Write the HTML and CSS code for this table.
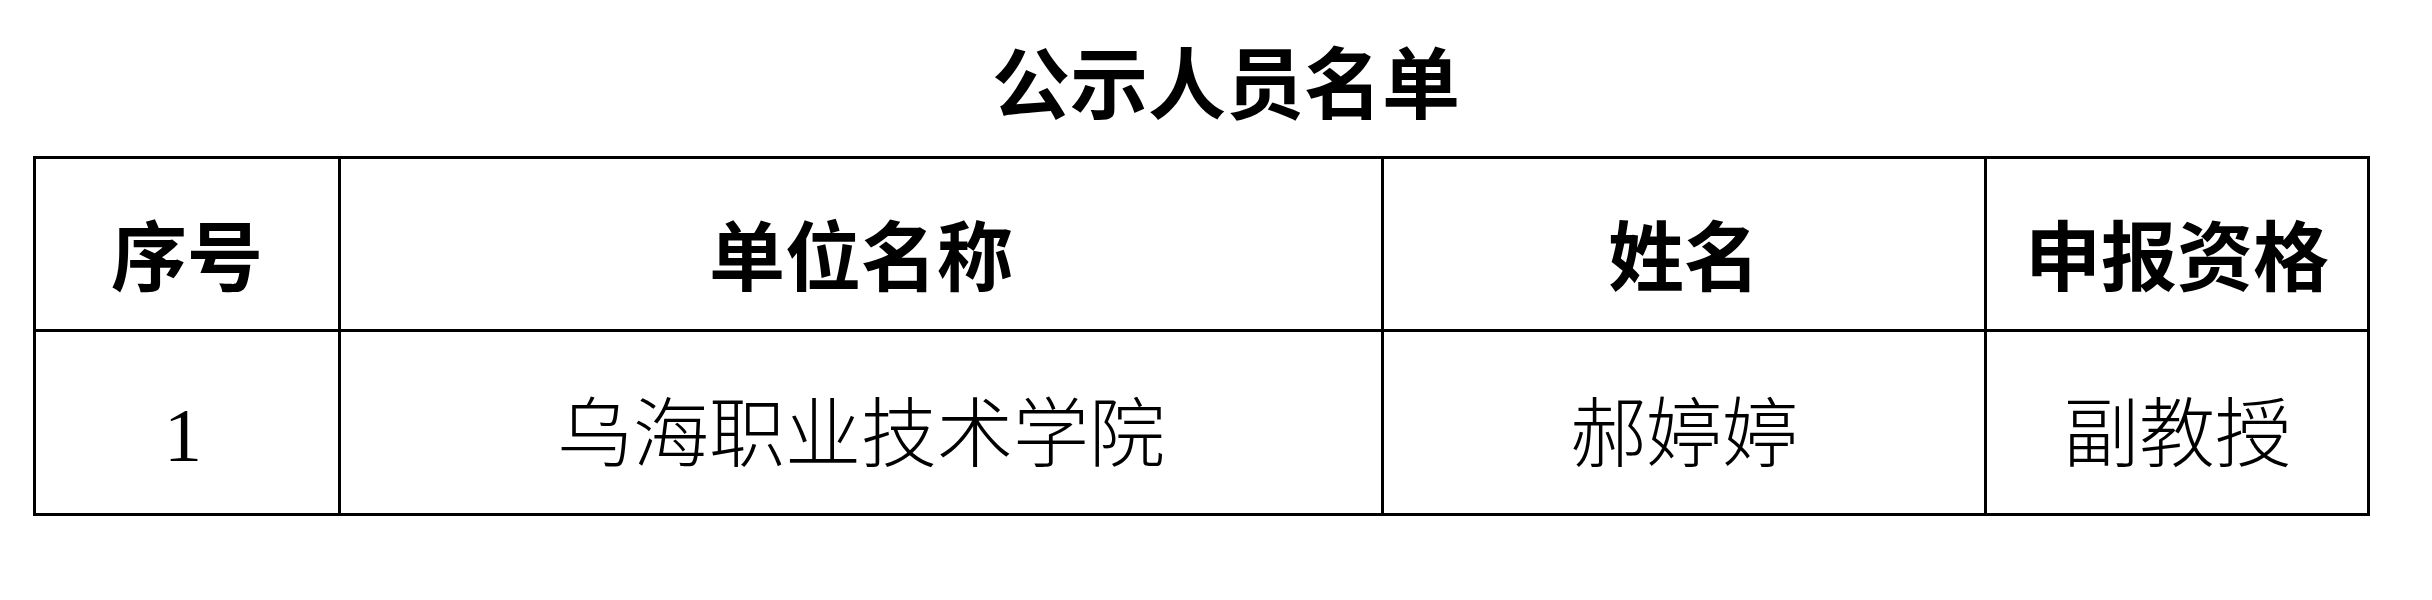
FILE: index.html
```html
<!DOCTYPE html>
<html lang="zh-CN">
<head>
<meta charset="utf-8">
<title>公示人员名单</title>
<link rel="stylesheet" href="styles.css">
</head>
<body>
<div class="page">
  <h1 class="title">公示人员名单</h1>
  <div class="table">
    <div class="cell head">序号</div>
    <div class="cell head">单位名称</div>
    <div class="cell head">姓名</div>
    <div class="cell head">申报资格</div>
    <div class="cell body num">1</div>
    <div class="cell body">乌海职业技术学院</div>
    <div class="cell body">郝婷婷</div>
    <div class="cell body">副教授</div>
  </div>
</div>
</body>
</html>
```

FILE: styles.css
```css
html, body {
  margin: 0;
  padding: 0;
  background: #fff;
}

.page {
  width: 2432px;
  font-family: "Liberation Serif", "Noto Sans CJK SC", serif;
  color: #000;
}

.title {
  margin: 48px 0 0;
  padding-left: 20px;
  height: 78px;
  font-size: 78px;
  line-height: 78px;
  font-weight: 700;
  text-align: center;
}

.table {
  margin: 30px 0 0 33px;
  width: max-content;
  display: grid;
  grid-template-columns: 302px 1040px 600px 380px;
  grid-template-rows: 170px 181px;
  gap: 3px;
  padding: 3px;
  background: #000;
}

.cell {
  background: #fff;
  display: flex;
  align-items: center;
  justify-content: center;
  font-size: 76px;
  line-height: 1;
  box-sizing: border-box;
}

.head {
  font-weight: 700;
  padding-top: 29px;
}

.body {
  font-weight: 300;
  padding-top: 24px;
}

.num {
  padding-right: 8px;
}
```
